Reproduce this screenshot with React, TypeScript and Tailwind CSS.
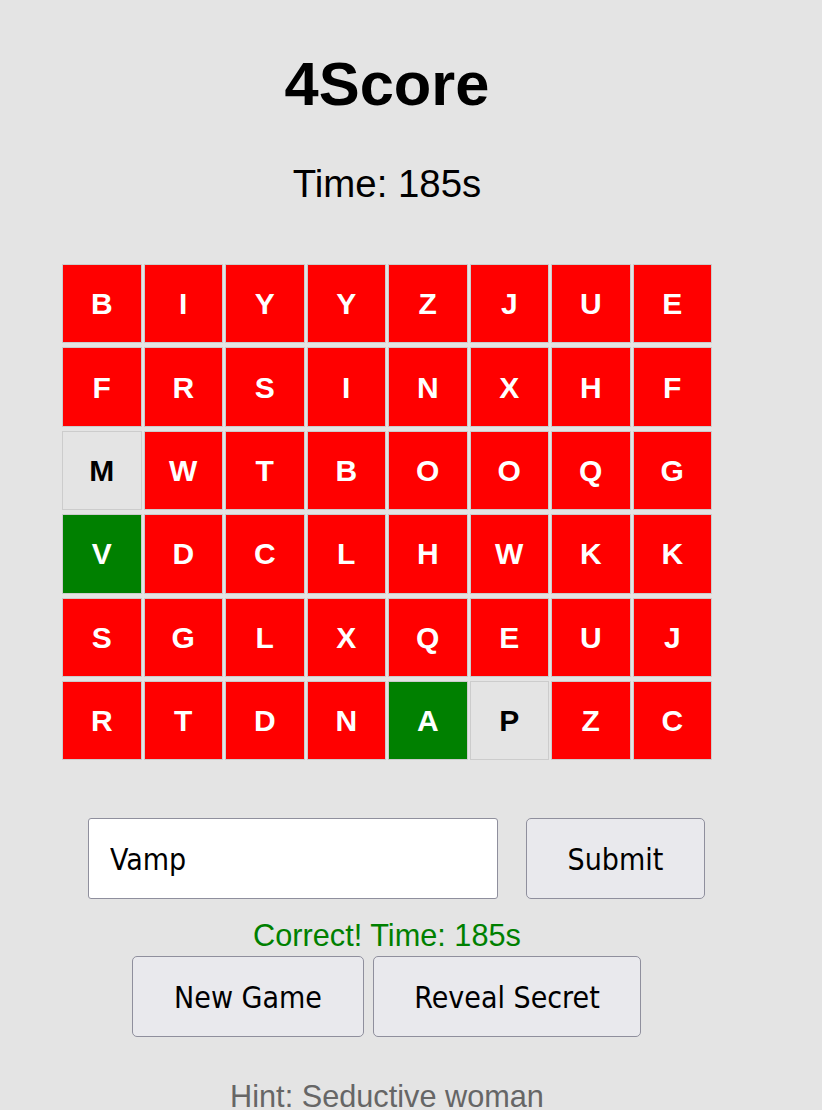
import React from "react";

const rows: string[][] = [
  ["B", "I", "Y", "Y", "Z", "J", "U", "E"],
  ["F", "R", "S", "I", "N", "X", "H", "F"],
  ["M", "W", "T", "B", "O", "O", "Q", "G"],
  ["V", "D", "C", "L", "H", "W", "K", "K"],
  ["S", "G", "L", "X", "Q", "E", "U", "J"],
  ["R", "T", "D", "N", "A", "P", "Z", "C"],
];

// n = neutral, g = green, r = red
const states: string[][] = [
  ["r", "r", "r", "r", "r", "r", "r", "r"],
  ["r", "r", "r", "r", "r", "r", "r", "r"],
  ["n", "r", "r", "r", "r", "r", "r", "r"],
  ["g", "r", "r", "r", "r", "r", "r", "r"],
  ["r", "r", "r", "r", "r", "r", "r", "r"],
  ["r", "r", "r", "r", "g", "n", "r", "r"],
];

const cellClass: Record<string, string> = {
  r: "bg-[#ff0000] text-white",
  g: "bg-[#008000] text-white",
  n: "bg-[#e4e4e4] text-black",
};

export default function App() {
  return (
    <div
      className="min-h-screen w-full bg-[#e4e4e4]"
      style={{ fontFamily: '"Liberation Sans", Arial, sans-serif' }}
    >
      <div className="w-[774px] flex flex-col items-center">
        <h1 className="mt-[53px] text-[61.4px] leading-[61px] font-bold text-black">4Score</h1>
        <div className="mt-[51px] text-[38.4px] leading-[38px] text-black">Time: 185s</div>

        <div className="mt-[61px] grid grid-cols-[repeat(8,79.5px)] auto-rows-[79.4px] gap-x-[2px] gap-y-[4px]">
          {rows.map((row, ri) =>
            row.map((ch, ci) => (
              <div
                key={`${ri}-${ci}`}
                className={`flex items-center justify-center border border-[#cccccc] text-[30px] font-bold ${cellClass[states[ri][ci]]}`}
              >
                {ch}
              </div>
            ))
          )}
        </div>

        <div
          className="mt-[57.6px] flex w-full justify-center pl-[19px] gap-[28px]"
          style={{ fontFamily: '"DejaVu Sans Condensed", "DejaVu Sans", sans-serif' }}
        >
          <input
            readOnly
            value="Vamp"
            className="h-[81px] w-[410px] rounded-[3px] border border-[#8f8f9d] bg-white pl-[21px] pt-[3px] text-[30px] text-black outline-none"
            style={{ fontStretch: "condensed" }}
          />
          <button
            className="h-[81px] w-[179px] rounded-[5px] border border-[#8f8f9d] bg-[#e9e9ed] pt-[3px] text-[30px] text-black"
            style={{ fontStretch: "condensed" }}
          >
            Submit
          </button>
        </div>

        <div className="mt-[22.5px] text-[30.7px] leading-[30.7px] text-[#008000]">Correct! Time: 185s</div>

        <div
          className="mt-[3.8px] flex gap-[9px] pr-[1px]"
          style={{ fontFamily: '"DejaVu Sans Condensed", "DejaVu Sans", sans-serif', fontStretch: "condensed" }}
        >
          <button className="h-[81px] w-[232px] rounded-[5px] border border-[#8f8f9d] bg-[#e9e9ed] pt-[3px] text-[30px] text-black">
            New Game
          </button>
          <button className="h-[81px] w-[268px] rounded-[5px] border border-[#8f8f9d] bg-[#e9e9ed] pt-[3px] text-[30px] text-black">
            Reveal Secret
          </button>
        </div>

        <div className="mt-[45px] text-[30.7px] leading-[30.7px] text-[#666666]">Hint: Seductive woman</div>
      </div>
    </div>
  );
}
